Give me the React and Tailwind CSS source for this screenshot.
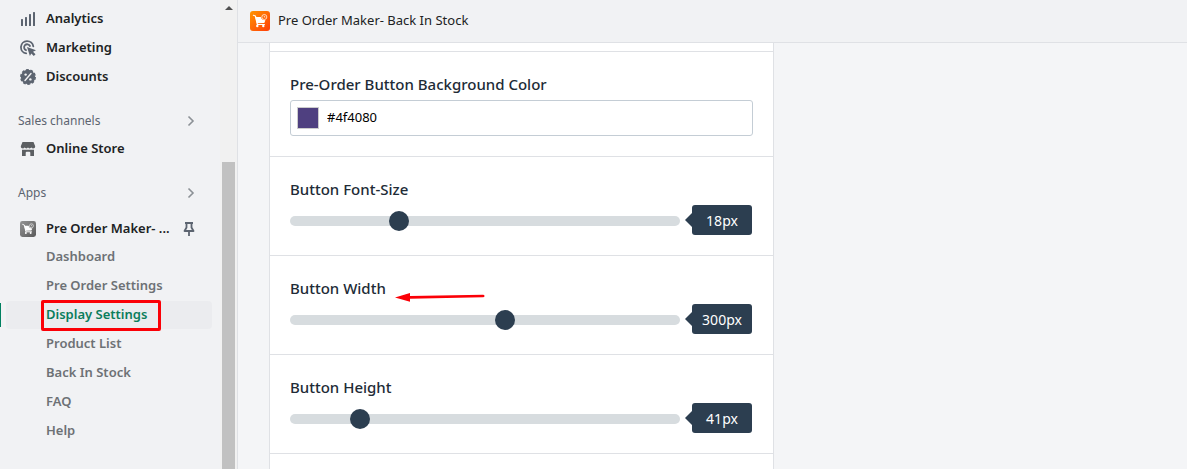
import React, { useState } from 'react';

const mainLinks = [
    { label: 'Analytics', icon: AnalyticsIcon },
    { label: 'Marketing', icon: MarketingIcon },
    { label: 'Discounts', icon: DiscountIcon }
];

const appLinks = ['Dashboard', 'Pre Order Settings', 'Display Settings', 'Product List', 'Back In Stock', 'FAQ', 'Help'];

function AnalyticsIcon() {
    return (
        <svg viewBox="0 0 16 16" className="w-4 h-4 shrink-0 text-[#5c6470]" fill="currentColor" aria-hidden="true">
            <rect x="1" y="8" width="2" height="7" rx="0.5" />
            <rect x="5" y="6" width="2" height="9" rx="0.5" />
            <rect x="9" y="3" width="2" height="12" rx="0.5" />
            <rect x="13" y="1" width="2" height="14" rx="0.5" />
        </svg>
    );
}

function MarketingIcon() {
    return (
        <svg viewBox="0 0 16 16" className="w-4 h-4 shrink-0 text-[#5c6470]" fill="none" stroke="currentColor" strokeWidth="1.8" aria-hidden="true">
            <path d="M6.2 13.4A6.2 6.2 0 1 1 13.3 6.4" strokeLinecap="round" />
            <path d="M6 10.2A3.1 3.1 0 1 1 10 6" strokeLinecap="round" />
            <path d="M7 7l9 3.200-3 1.600 2.500 2.500-1.700 1.700-2.500-2.500L9.900 16z" fill="currentColor" stroke="none" />
        </svg>
    );
}

function DiscountIcon() {
    return (
        <svg viewBox="0 0 16 16" className="w-4 h-4 shrink-0 text-[#5c6470]" aria-hidden="true">
            <circle cx="8" cy="8" r="7.2" fill="currentColor" />
            <circle cx="8" cy="8" r="7.2" fill="none" stroke="currentColor" strokeWidth="1.5" strokeDasharray="2.8 1.724" />
            <path d="M11 4.5l-6 7" stroke="#f1f2f3" strokeWidth="1.4" strokeLinecap="round" />
            <circle cx="5.6" cy="5.6" r="1.2" fill="#f1f2f3" />
            <circle cx="10.4" cy="10.4" r="1.2" fill="#f1f2f3" />
        </svg>
    );
}

function StoreIcon() {
    return (
        <svg viewBox="0 0 16 16" className="w-4 h-4 shrink-0 text-[#5c5f62]" fill="currentColor" aria-hidden="true">
            <path d="M2.5 1h11L15.200 5.200c0 1.300-.9 2.300-2.200 2.300-.9 0-1.500-.6-1.700-1.200-.3.700-.9 1.200-1.700 1.200S8.300 7 8 6.300C7.700 7 7.200 7.500 6.400 7.500S5 7 4.700 6.300C4.500 6.900 3.900 7.500 3 7.500 1.700 7.500.8 6.500.8 5.200z" />
            <path d="M2 8.700h12V15h-3.700v-3.200q0-1-1-1H6.700q-1 0-1 1V15H2z" />
        </svg>
    );
}

function CartLogo({ gray, className }) {
    return (
        <svg viewBox="0 0 20 20" className={className} aria-hidden="true">
            <defs>
                <linearGradient id={gray ? 'cartGray' : 'cartOrange'} x1="0" y1="0" x2="1" y2="1">
                    <stop offset="0" stopColor={gray ? '#949494' : '#ff9500'} />
                    <stop offset="1" stopColor={gray ? '#5a5a5a' : '#ff3d0a'} />
                </linearGradient>
            </defs>
            <rect width="20" height="20" rx="3" fill={gray ? 'url(#cartGray)' : 'url(#cartOrange)'} />
            <path d="M3.400 4.300l2 .7 2 8.500h7" fill="none" stroke="#fff" strokeWidth="1.200" strokeLinecap="round" strokeLinejoin="round" />
            <path d="M5.200 6h5.600c.5 2.200 2 3.300 4.600 3.300l-1.100 2.600-7.400.3z" fill="#fff" />
            <circle cx="14.300" cy="6" r="2.500" fill="none" stroke="#fff" strokeOpacity="0.800" strokeWidth="0.900" />
            <path d="M14.300 4.800v1.300h1" fill="none" stroke="#fff" strokeWidth="0.700" />
            <circle cx="7.300" cy="15" r="1.200" fill="#fff" />
            <circle cx="13.300" cy="15" r="1.200" fill="#fff" />
        </svg>
    );
}

function ChevronIcon() {
    return (
        <svg viewBox="0 0 8 12" className="w-2 h-3" fill="none" stroke="#8c9196" strokeWidth="1.6" aria-hidden="true">
            <path d="M1.500 1.500L6 6l-4.500 4.500" />
        </svg>
    );
}

function PinIcon() {
    return (
        <svg viewBox="0 0 12 16" className="w-3 h-4" fill="none" stroke="#5c6470" strokeWidth="1.8" aria-hidden="true">
            <path d="M2 2h8M3.500 2v4.500L1.500 10h9L8.500 6.500V2M6 10v5" strokeLinejoin="round" />
        </svg>
    );
}

function SectionHeading({ children }) {
    return (
        <button className="flex items-center justify-between w-full h-5 mt-5 pl-[18px] pr-[25px] text-[12px] font-normal text-[#5c6470]">
            <span>{children}</span>
            <ChevronIcon />
        </button>
    );
}

function Sidebar() {
    return (
        <aside className="flex w-[238px] shrink-0 bg-[#f1f2f4] border-r border-[#dfe1e5]">
            <nav className="flex-1 min-w-0 pt-1 text-[13px] font-semibold text-[#202223]">
                {mainLinks.map(({ label, icon: Icon }) => (
                    <a key={label} href="#" className="flex items-center gap-[10px] h-[29px] pl-5">
                        <Icon />
                        {label}
                    </a>
                ))}

                <SectionHeading>Sales channels</SectionHeading>
                <a href="#" className="flex items-center gap-[10px] h-[29px] mt-[3px] pl-5">
                    <StoreIcon />
                    Online Store
                </a>

                <SectionHeading>Apps</SectionHeading>
                <div className="flex items-center h-[29px] mt-[11px] pl-5 pr-[25px]">
                    <a href="#" className="flex flex-1 items-center gap-[10px]">
                        <CartLogo gray className="w-4 h-4 shrink-0" />
                        Pre Order Maker- ...
                    </a>
                    <button aria-label="Unpin app"><PinIcon /></button>
                </div>
                <ul className="text-[#6d7175]">
                    {appLinks.map((label) => (
                        <li key={label} className="relative h-[29px] pl-[6px] pr-2">
                            {label === 'Display Settings' ? (
                                <>
                                    <span className="absolute left-0 top-[2px] w-px h-6 bg-[#008060]" />
                                    <a href="#" aria-current="page" className="flex items-center h-7 pl-10 rounded bg-[#ebecef] text-[#0a7d5c]">{label}</a>
                                    <span className="absolute left-[41px] -top-px w-[120px] h-[31px] border-3 border-[#fb0007] rounded-[2px] pointer-events-none" />
                                </>
                            ) : (
                                <a href="#" className="flex items-center h-7 pl-10">{label}</a>
                            )}
                        </li>
                    ))}
                </ul>
            </nav>
            {/* scrollbar */}
            <div className="flex flex-col items-end w-[17px] shrink-0 pr-[2px] bg-[#f1f1f1]">
                <div className="flex items-center justify-center w-[13px] h-4">
                    <svg viewBox="0 0 8 4" className="w-2 h-1" aria-hidden="true"><path d="M0 4l4-4 4 4z" fill="#505050" /></svg>
                </div>
                <div className="w-[13px] flex-1 mt-[146px] bg-[#c1c1c1]" />
            </div>
        </aside>
    );
}

function RangeSetting({ id, label, min, max, initial, arrow }) {
    const [value, setValue] = useState(initial);

    return (
        <div className="px-5 pt-[22px] pb-5 border-b border-[#dfe1e5]">
            <div className="relative">
                <label htmlFor={id} className="block leading-5 text-[15px] font-medium">{label}</label>
                {arrow && (
                    <svg viewBox="0 0 90 10" className="absolute left-[105px] top-[14px] w-[90px] h-[10px]" aria-hidden="true">
                        <path d="M0 5.600L15 1v3l73-1.200q1.500 0 1.500 1.200t-1.500 1.300L15 6.700v3z" fill="#fb0007" />
                    </svg>
                )}
            </div>
            <div className="flex items-center gap-3 mt-[6px]">
                <input
                    id={id}
                    type="range"
                    min={min}
                    max={max}
                    value={value}
                    onChange={(e) => setValue(e.target.value)}
                    className="flex-1 min-w-0 h-[10px] mt-[2px] rounded-full appearance-none bg-[#d7dcdf] [&::-webkit-slider-thumb]:appearance-none [&::-webkit-slider-thumb]:w-5 [&::-webkit-slider-thumb]:h-5 [&::-webkit-slider-thumb]:rounded-full [&::-webkit-slider-thumb]:bg-[#2c3e50]"
                />
                <output htmlFor={id} className="relative flex items-center justify-center w-[60px] h-[30px] mr-px rounded-[3px] bg-[#2c3e50] text-[14px] text-white">
                    <svg viewBox="0 0 7 14" className="absolute -left-[7px] top-2 w-[7px] h-[14px]" aria-hidden="true">
                        <path d="M7 0L0 7l7 7z" fill="#2c3e50" />
                    </svg>
                    {value}px
                </output>
            </div>
        </div>
    );
}

export default function App() {
    const [color, setColor] = useState('#4f4080');

    return (
        <div className="flex h-screen overflow-hidden font-['Noto_Sans','Open_Sans',sans-serif] text-[#212b36] bg-[#f4f5f7]">
            <Sidebar />
            <main className="flex flex-col flex-1 min-w-0">
                <header className="flex items-center gap-2 h-[43px] shrink-0 px-3 bg-[#f1f2f4] border-b border-[#dfe1e5]">
                    <CartLogo className="w-5 h-5" />
                    <h1 className="text-[13px] text-[#202223]">Pre Order Maker- Back In Stock</h1>
                </header>
                <div className="flex-1 min-h-0 overflow-hidden px-[31px]">
                    <form className="flex flex-col min-h-full w-full max-w-[505px] bg-white border-x border-[#dfe1e5]">
                        <div className="h-[9px] border-b border-[#dfe1e5]" />
                        <div className="px-5 pt-[22px] pb-5 border-b border-[#dfe1e5]">
                            <label htmlFor="bg-color" className="block leading-5 text-[15px] font-medium">Pre-Order Button Background Color</label>
                            <div className="flex items-center gap-2 h-9 mt-[6px] px-[6px] border border-[#c4cdd5] rounded-[3px]">
                                <span className="w-[22px] h-[22px] shrink-0 border border-[#ccc]" style={{ backgroundColor: color }} />
                                <input
                                    id="bg-color"
                                    type="text"
                                    value={color}
                                    onChange={(e) => setColor(e.target.value)}
                                    className="flex-1 min-w-0 bg-transparent text-[13px] text-black outline-none"
                                />
                            </div>
                        </div>
                        <RangeSetting id="font-size" label="Button Font-Size" min={10} max={40} initial={18} />
                        <RangeSetting id="width" label="Button Width" min={50} max={501} initial={300} arrow />
                        <RangeSetting id="height" label="Button Height" min={30} max={98} initial={41} />
                    </form>
                </div>
            </main>
        </div>
    );
}
